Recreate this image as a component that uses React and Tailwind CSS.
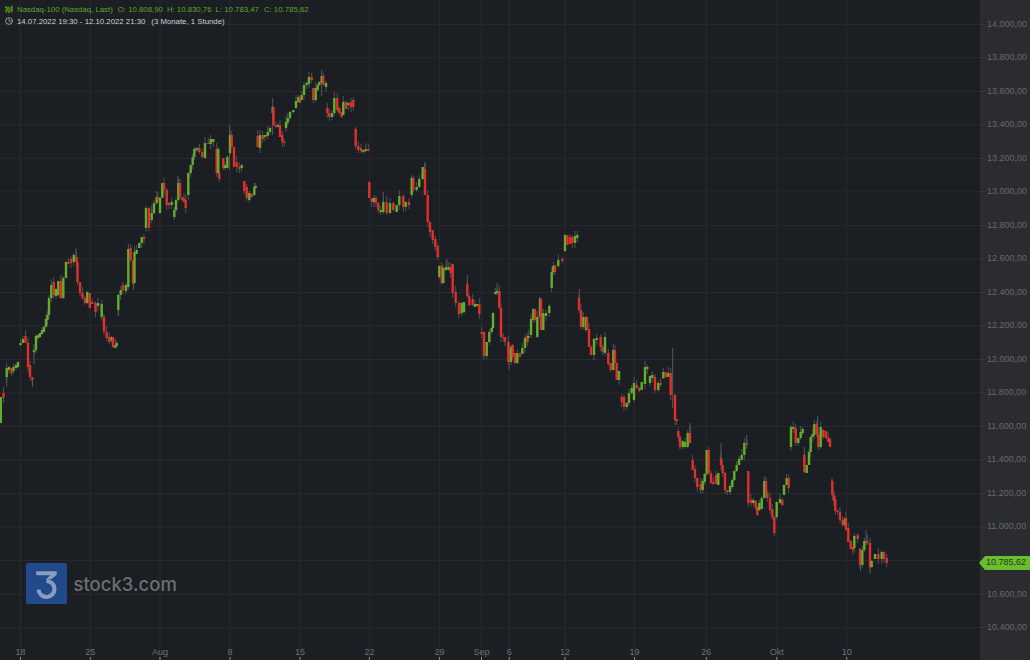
import React from "react";
import { Clock } from "lucide-react";

const bars = `0.8 397 423 g;3.5 393 398 r;
6.7 368 377 g;9 367 370 g;11.5 368 373 r;13.5 367 371 g;16 365 368 g;18 362 367 g;
20.5 343 345 g;23 339 343 g;25.5 336 343 r;28 343 367 r;30 365 377 r;32.4 377 380 r;
34 350 352 g;36 336 350 g;38 335 338 g;40 333 337 g;42 330 334 g;44 327 332 g;46 319 327 g;47.5 315 320 g;49 298 315 g;51.3 285 298 g;
53.7 282 295 r;56 289 296 g;58.3 281 295 g;60.8 281 298 r;63.3 278 298 g;66 262 278 g;68.3 262 264 r;71 259 263 r;73.8 255 262 g;76.5 257 262 r;77.5 262 282 r;80 282 293 r;82.5 293 298 r;85 298 303 r;87.3 292 303 g;89.8 293 308 r;92.3 302 304 r;95.5 303 312 r;98 303 306 g;101.7 304 317 g;104 317 332 r;106.7 332 338 r;109.3 337 342 r;111.7 337 341 g;113 337 347 r;115.5 345 348 g;116.8 343 346 g;
118.3 295 310 g;120.7 290 295 g;123 285 290 r;126 285 291 g;
128.3 249 287 g;130.7 248 260 r;133 260 283 r;134.5 252 283 g;136.7 250 254 g;139.3 243 248 g;141.7 237 243 g;144 237 239 r;
146 208 228 g;149 208 228 r;151.7 213 220 g;154 203 213 g;156.7 197 203 g;158 197 200 r;160 198 213 g;162.3 183 198 g;164 183 190 r;166.7 190 205 r;169 203 205 r;171.7 202 205 g;174.3 210 217 g;176 200 210 g;178.3 183 200 g;180 183 197 r;182.3 197 200 r;184 199 202 r;185.7 200 208 r;
188.3 173 195 g;190.7 165 173 g;192.7 157 165 g;194.3 149 157 g;196.7 148 150 g;199.3 148 152 r;202.3 152 157 r;205 143 158 g;208.3 143 144 r;210.7 139 144 g;213.3 139 142 g;216.7 149 173 r;218.3 149 173 g;219.3 173 179 r;
223.3 158 168 r;225 165 168 g;227.3 157 168 g;230 135 153 g;231.7 135 147 r;234 147 167 r;236.7 162 167 r;239.3 167 169 r;241.7 165 168 g;
244.3 181 191 r;246.7 187 198 r;249.3 193 200 g;251.7 194 197 r;254.3 187 195 g;255.7 186 188 g;
257.7 136 147 r;260 135 148 g;262.7 135 139 r;265 135 137 g;267.7 132 136 g;270 128 132 g;272.7 107 113 g;273.5 107 125 r;276 125 127 r;278.3 125 127 g;280 125 137 r;282.3 135 142 r;284.3 142 143 r;
286 122 128 g;287.7 118 123 g;290 112 118 g;293.3 110 112 g;296 101 108 g;298.3 97 102 g;300 97 103 r;301.7 95 100 g;304 85 95 g;306.7 83 85 g;309 77 84 g;311.7 77 80 r;
313.3 88 100 r;315.7 88 100 g;317.7 85 90 g;319.3 82 85 g;321.7 76 83 g;323.3 76 85 r;326 83 87 g;
327.3 108 113 r;329.3 113 117 r;332 113 117 g;334.3 98 113 g;337.3 98 110 r;339.3 108 113 r;341.7 112 117 r;343.3 102 115 g;346 102 109 r;348.3 103 105 g;351 102 107 r;353.3 100 107 r;
355.7 129 146 r;358.3 146 150 r;361 148 151 r;363.3 150 152 g;365.7 149 151 g;368.3 149 151 r;
369.3 182 198 r;371.7 198 202 r;374 198 202 g;376 198 203 r;378.3 203 210 r;380.7 210 212 g;383.3 202 212 g;386.7 202 213 r;390 203 213 g;393.3 203 210 r;396.7 205 212 g;399.3 196 205 g;403.3 196 207 r;405.7 202 207 g;409 202 205 r;
411.7 178 195 g;413.3 178 190 r;416.7 187 190 g;419.3 179 187 g;422.7 167 179 g;425 169 195 r;427.7 195 222 r;430 222 232 r;432.7 230 240 r;435.3 239 247 r;437.7 246 257 r;
439.3 266 277 g;441.7 266 283 r;443.3 268 283 g;446 267 270 g;448.7 267 270 g;450.7 267 273 r;452.7 264 293 r;455.7 292 303 r;459 303 314 r;461.7 303 313 g;464 302 312 g;467.3 284 296 r;469.3 296 305 r;472.7 299 305 r;475 304 307 g;476.7 304 306 g;479.3 304 314 r;
481.7 332 334 r;484 332 356 r;486.7 342 356 g;489.3 332 342 g;491.7 328 332 g;493 313 328 g;495.3 292 294 g;497.3 291 293 g;499.3 291 308 r;501 308 337 r;503.3 337 338 r;505 337 342 r;508.3 342 362 r;511 347 362 g;512.7 345 357 r;515 353 363 r;517.3 353 363 g;520 354 357 r;522.3 348 354 g;525 338 348 g;527.3 336 342 r;528.3 336 338 g;531 319 335 g;533.3 309 320 g;535 309 320 r;537.3 317 337 g;540 299 317 g;541 299 330 r;543.3 313 330 g;546 313 316 g;549.3 306 313 g;
551.7 272 288 g;553.3 266 272 g;555 265 272 r;558.3 260 266 g;562.3 259 261 r;
565 235 251 g;567.3 235 245 r;570 237 244 r;572.3 237 243 r;575 236 243 g;577.3 235 238 g;
579 298 310 r;581 310 327 r;583.3 317 327 g;586 317 330 g;
587 317 329 r;589 329 347 r;591 347 355 r;594 339 355 g;596.7 338 340 g;
600.7 337 347 r;602.7 347 352 r;605 337 353 g;608.3 353 364 r;610.7 363 370 r;613.3 350 370 g;615 350 363 r;616.7 363 380 r;619 371 380 g;
621.7 397 402 r;624 397 407 r;626.7 403 407 g;629 393 403 g;631.7 388 393 g;634 383 400 g;636.7 385 388 r;639.3 388 391 r;641.7 382 390 g;645 367 384 g;647.3 367 369 g;650 376 383 g;652.3 375 378 g;655 377 390 r;658.3 383 390 g;660.7 383 385 r;663.3 372 378 g;665.7 372 377 r;668.3 373 377 g;670.7 373 395 r;675 395 420 r;676.7 419 421 r;
678.3 431 437 r;680 437 447 r;682.7 441 447 g;685 442 447 g;687.7 433 447 g;690 433 443 r;
692.7 460 470 r;695 469 478 r;697.3 478 487 r;700.7 484 490 r;702.7 481 490 g;704.7 474 482 g;706.7 450 474 g;708.7 450 473 r;711 473 483 r;713.3 482 484 r;716 475 484 r;718.3 473 485 g;
721 458 465 r;722.7 465 473 r;725 473 490 r;727.3 490 492 r;730 486 492 g;732.3 480 487 g;734.3 471 480 g;736.7 465 471 g;739 459 465 g;741.7 455 460 g;744.3 443 455 g;746.7 443 445 r;
748.3 471 503 r;751 500 503 r;753.3 500 503 g;755.7 501 508 r;757.3 507 515 r;759.3 503 510 g;761.7 498 509 g;764.3 481 498 g;766 481 493 r;767.3 493 498 r;770 498 510 r;772.3 509 517 r;774.3 517 533 r;776.7 502 517 g;780 499 503 g;782.3 500 505 r;784 485 495 g;786.7 478 485 g;788.7 478 488 r;
791 427 447 g;793.3 427 429 g;795.7 428 443 r;798.3 438 443 g;800.7 432 438 g;802.7 429 433 g;
804.3 455 472 r;806.7 465 473 g;809 452 465 g;810.7 437 452 g;812.7 434 437 g;814.3 424 435 g;816.7 424 434 r;818.3 434 447 r;820.7 427 447 g;823.3 430 437 r;826 431 438 r;828.3 438 442 r;830 439 447 r;
832.3 481 495 r;834 495 501 r;835.3 499 511 r;837.7 511 512 r;840 512 520 r;842.7 520 525 r;845 518 525 g;846 518 530 r;848.3 528 542 r;850.7 541 549 r;852.7 547 550 r;854.3 536 548 g;857.7 535 539 r;
860 549 565 r;862.3 550 565 g;864.3 541 550 g;867.3 541 543 r;870 543 567 r;871.7 561 567 g;875 554 559 g;878.3 554 559 r;881.7 552 559 g;884 552 559 r;886.7 558 563 r`
  .split(";")
  .map((s) => s.trim().split(" "))
  .map(([x, t, b, c]) => ({ x: +x, t: +t, b: +b, c }));

const longWicks = [[672.7,348,408],[229.5,125,170],[272.7,98,135],[321.7,70,96],[425,162,175],[579.3,289,300],[497,283,295],[509,342,370],[467.3,275,290],[6.7,377,387],[32.4,377,387],[34,352,364],[118.3,310,316],[76,248,258],[746.7,435,445],[721,443,460],[690,423,435],[817.7,416,430],[804.3,447,460],[832,478,485],[866,530,545],[870,567,574],[860.5,565,571],[383.3,192,205],[447,259,270],[539.7,297,303],[151.7,205,215],[133.5,283,290],[178,176,185]];

const yLabels = ["14.000,00","13.800,00","13.600,00","13.400,00","13.200,00","13.000,00","12.800,00","12.600,00","12.400,00","12.200,00","12.000,00","11.800,00","11.600,00","11.400,00","11.200,00","11.000,00","","10.600,00","10.400,00"];
const xTicks = [[20.5,"18"],[90.3,"25"],[160,"Aug"],[230,"8"],[300,"15"],[369.4,"22"],[439.4,"29"],[481.5,"Sep"],[509.3,"6"],[565,"12"],[634.6,"19"],[706.3,"26"],[776.8,"Okt"],[846.7,"10"]];
const hLines = yLabels.map((_, i) => 24.3 + i * 33.52);

function wick(i) {
  const r = (i * 7919) % 101;
  const up = r % 7;
  const down = (r * 13) % 6;
  return [up, down];
}

function Chart() {
  return (
    <svg width="980" height="660" viewBox="0 0 980 660" className="block">
      {hLines.map((y) => (
        <line key={y} x1="0" x2="980" y1={y} y2={y} stroke="#282a2f" strokeWidth="1" />
      ))}
      {xTicks.map(([x]) => (
        <line key={x} x1={x} x2={x} y1="0" y2="660" stroke="#282a2f" strokeWidth="1" />
      ))}
      {xTicks.map(([x]) => (
        <line key={x} x1={x} x2={x} y1="657" y2="660" stroke="#8a8c90" strokeWidth="1" />
      ))}
      {bars.map((b, i) => {
        const [u, d] = wick(i);
        return <line key={i} x1={b.x} x2={b.x} y1={b.t - u} y2={b.b + d} stroke="#55575b" strokeWidth="0.9" />;
      })}
      {longWicks.map(([x, a, b]) => (
        <line key={x} x1={x} x2={x} y1={a} y2={b} stroke="#5e6064" strokeWidth="0.9" />
      ))}
      {bars.map((b, i) => (
        <rect key={i} x={b.x - 1.2} y={b.t} width="2.4" height={b.b - b.t} fill={b.c === "r" ? "#e1302a" : "#65ad2a"} />
      ))}
    </svg>
  );
}

function Header() {
  return (
    <div className="absolute left-[5px] top-[4.5px] flex flex-col gap-[3px] text-[7.8px] leading-[9px]">
      <div className="flex h-[9px] items-center text-[#5fa62c]">
        <svg width="8" height="9" viewBox="0 0 8 9" className="mr-[4px]" fill="none" stroke="#5fa62c">
          <path d="M1.2 0.5V8M0 2.5h2.4V6H0M4 1.5V8.5M2.9 3h2.2v3.5H2.9M6.8 0.5V8M5.7 2h2.2v3.5H5.7" strokeWidth="0.8" />
        </svg>
        <span>Nasdaq-100 (Nasdaq, Last)</span>
        <span className="ml-[5px]">O: 10.808,90</span>
        <span className="ml-[4px]">H: 10.830,76</span>
        <span className="ml-[4px]">L: 10.783,47</span>
        <span className="ml-[5px]">C: 10.785,62</span>
      </div>
      <div className="flex h-[9px] items-center text-[#d0d3d6]">
        <Clock size={8} strokeWidth={2} className="mr-[4px]" />
        <span>14.07.2022 19:30 - 12.10.2022 21:30</span>
        <span className="ml-[6px]">(3 Monate, 1 Stunde)</span>
      </div>
    </div>
  );
}

function Logo() {
  return (
    <div className="absolute left-[25.5px] top-[563px] flex items-center gap-[7px]">
      <svg width="41" height="41" viewBox="0 0 40 40">
        <rect width="40" height="40" rx="1.5" fill="#204a8b" />
        <polygon points="10,8 30,8 30,11.5 25,15.5 19.5,16 23.5,12 10,12" fill="#8a9dc0" />
        <path d="M12.2 26 A7.8 7.8 0 1 0 20 17.6" fill="none" stroke="#8a9dc0" strokeWidth="4" />
      </svg>
      <span className="font-['Inter',sans-serif] text-[18.5px] font-medium leading-[22px] text-[#6c6e73]">stock3.com</span>
    </div>
  );
}

function XAxis() {
  return (
    <div className="absolute bottom-0 left-0 flex h-[14px] w-[980px] items-start text-[9px] leading-[12px] text-[#6f7276]">
      {xTicks.map(([x, t], i) => (
        <div key={t} className="flex w-0 justify-center" style={{ marginLeft: i ? x - xTicks[i - 1][0] : x }}>
          <span>{t}</span>
        </div>
      ))}
    </div>
  );
}

function YAxis() {
  return (
    <div className="relative flex w-[50px] flex-col bg-[#2b2c30] pt-[7.5px] text-[9px] text-[#66686d]">
      {yLabels.map((l, i) => (
        <div key={i} className="flex h-[33.52px] flex-none items-center">
          <span className="h-px w-[5px] bg-[#3a3b40]" />
          <span className="ml-[2px] leading-none">{l}</span>
        </div>
      ))}
      <div className="absolute left-[-1px] top-[556px] flex h-[14px] w-[51px] items-center justify-end bg-[#6bbd30] pr-[4px] text-[9px] font-normal text-[#1d3a10] [clip-path:polygon(0_50%,6px_0,100%_0,100%_100%,6px_100%)]">
        10.785,62
      </div>
    </div>
  );
}

export default function App() {
  return (
    <div className="flex h-[660px] w-[1030px] overflow-hidden bg-[#1b1e23] font-['Liberation_Sans',Arial,sans-serif]">
      <div className="relative h-[660px] w-[980px] flex-none">
        <Chart />
        <Header />
        <Logo />
        <XAxis />
      </div>
      <YAxis />
    </div>
  );
}
